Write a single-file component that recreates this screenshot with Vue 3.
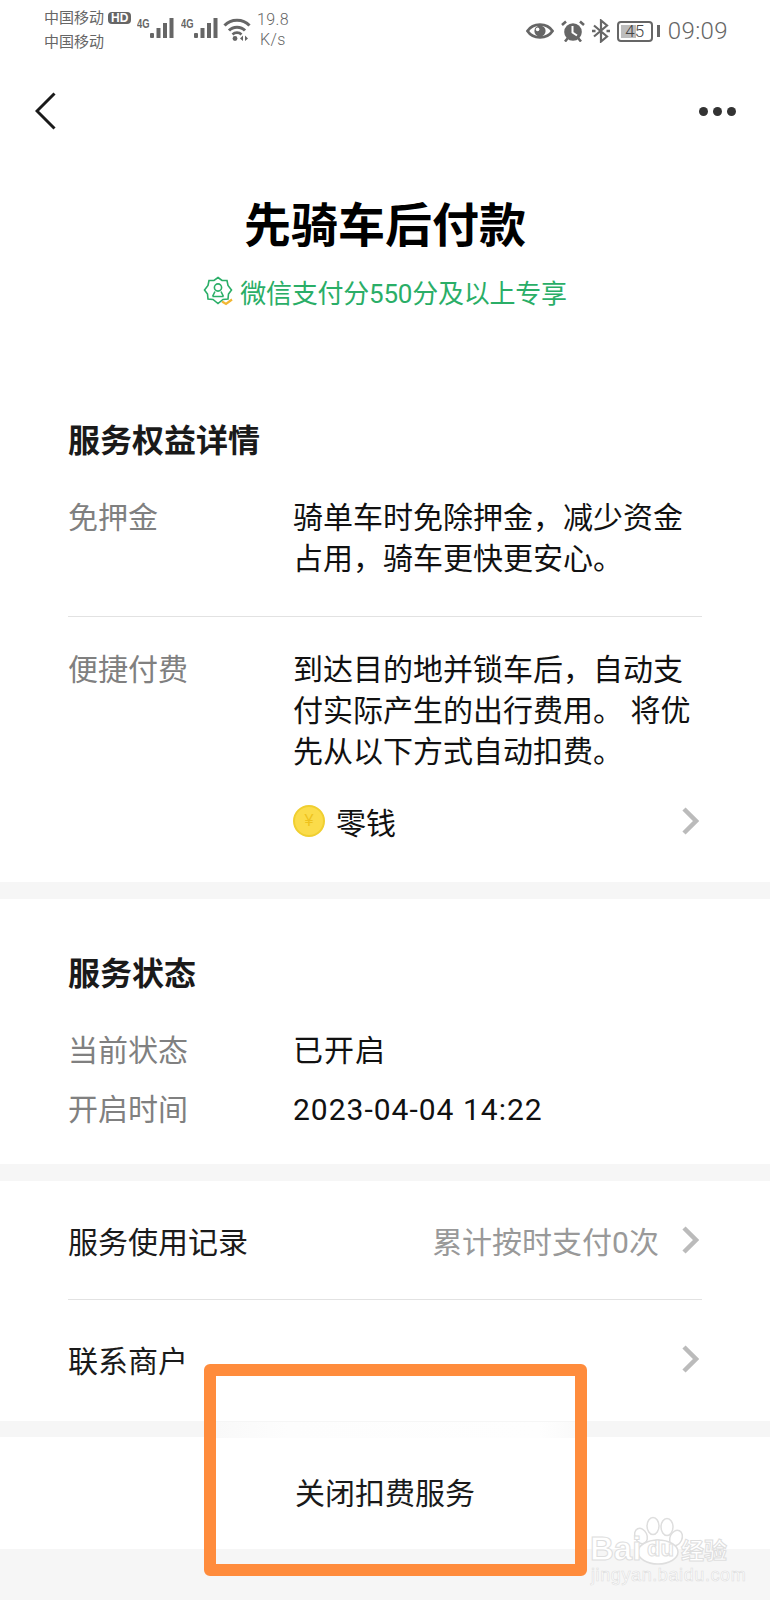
<script setup>
const benefits = [
  { label: "免押金", text: "骑单车时免除押金，减少资金占用，骑车更快更安心。" },
  { label: "便捷付费", text: "到达目的地并锁车后，自动支付实际产生的出行费用。 将优先从以下方式自动扣费。" }
]
const status = [
  { label: "当前状态", value: "已开启" },
  { label: "开启时间", value: "2023-04-04 14:22" }
]
</script>

<template>
  <div class="page">
    <div class="statusbar">
      <div class="carrier">
        <div class="carrier-line">中国移动<span class="hd">HD</span></div>
        <div class="carrier-line">中国移动</div>
      </div>
      <div class="signal" v-for="n in 2" :key="n">
        <span class="net">4G</span>
        <svg width="24" height="21" viewBox="0 0 24 21">
          <rect x="0" y="15" width="4" height="5" rx="1" fill="#666" />
          <rect x="6.5" y="10" width="4" height="10" fill="#666" />
          <rect x="13" y="5" width="4" height="15" fill="#666" />
          <rect x="19.5" y="0" width="4" height="20" fill="#666" />
        </svg>
      </div>
      <svg class="wifi" width="28" height="23" viewBox="0 0 28 23" fill="none" stroke="#666" stroke-width="3">
        <path d="M1.5 7.5 C8 0.5 20 0.5 26.5 7.5" />
        <path d="M6 12.5 C10 8 18 8 22 12.5" />
        <path d="M9.5 16.5 C12 14 16 14 18.5 16.5" stroke-width="2.6" />
        <circle cx="12" cy="20.5" r="2.4" fill="#666" stroke="none" />
        <path d="M20 17.5 l-3 3 l3 2.5 z M22 17.5 l3 3 l-3 2.5 z" fill="#666" stroke="none" />
      </svg>
      <div class="speed">
        <div>19.8</div>
        <div>K/s</div>
      </div>
      <div class="status-right">
        <svg width="28" height="18" viewBox="0 0 28 18">
          <path d="M1.5 9 C7 0.5 21 0.5 26.5 9 C21 17.5 7 17.5 1.5 9 Z" fill="none" stroke="#666" stroke-width="2.8" />
          <circle cx="14" cy="9" r="5.6" fill="#666" />
          <circle cx="11.6" cy="7.4" r="1.8" fill="#fff" />
        </svg>
        <svg width="24" height="22" viewBox="0 0 24 22">
          <circle cx="12" cy="12" r="8.8" fill="#666" />
          <path d="M11.5 6 V12.5 L16 15.5" fill="none" stroke="#fff" stroke-width="2" />
          <path d="M1 5 L5 1.5 M23 5 L19 1.5" stroke="#666" stroke-width="2.6" />
          <path d="M4 21.5 L6.5 18.5 M20 21.5 L17.5 18.5" stroke="#666" stroke-width="2.6" />
        </svg>
        <svg width="18" height="24" viewBox="0 0 18 24" fill="none" stroke="#666" stroke-width="2.2">
          <path d="M2 6.5 L15 17.5 L9 22.5 V1.5 L15 6.5 L2 17.5" />
          <path d="M14.5 12 h3.5 M0 12 h3.5" stroke-width="2.6" />
        </svg>
        <div class="battery">
          <div class="battery-body">
            <span class="battery-fill"></span>
            <span class="battery-num">45</span>
          </div>
          <span class="battery-tip"></span>
        </div>
        <span class="clock">09:09</span>
      </div>
    </div>

    <div class="nav">
      <svg width="22" height="38" viewBox="0 0 22 38" fill="none" stroke="#1a1a1a" stroke-width="3">
        <path d="M19.5 1.5 L2 19 L19.5 36.5" />
      </svg>
      <div class="dots"><i></i><i></i><i></i></div>
    </div>

    <h1 class="title">先骑车后付款</h1>
    <div class="badge">
      <svg width="30" height="30" viewBox="0 0 30 30" fill="none" stroke="#2aae67" stroke-width="1.6">
        <path d="M15 1.5 L19 4.5 L24 4.5 L25 9.5 L28.5 14 L25.5 18 L25 23 L20 23.5 L15 27.5 L10 23.5 L5 23 L4.5 18 L1.5 14 L5 9.5 L6 4.5 L11 4.5 Z" />
        <circle cx="15" cy="11.5" r="3.6" />
        <path d="M9.5 20.5 L12 15.5 M20.5 20.5 L18 15.5 M9.5 20.5 H20.5" />
        <path d="M19 25.5 L23 28 L29 23.5" stroke="#f2b632" stroke-width="2.2" />
      </svg>
      <span>微信支付分550分及以上专享</span>
    </div>

    <section class="benefits">
      <h2 class="heading">服务权益详情</h2>
      <div class="benefit" v-for="item in benefits" :key="item.label">
        <div class="label">{{ item.label }}</div>
        <div class="body">{{ item.text }}</div>
      </div>
      <div class="pay-row">
        <span class="coin">¥</span>
        <span class="pay-name">零钱</span>
        <svg class="chevron" width="18" height="28" viewBox="0 0 18 28" fill="none" stroke="#bbb" stroke-width="4.5">
          <path d="M3 2 L15 14 L3 26" />
        </svg>
      </div>
    </section>

    <section class="state">
      <h2 class="heading">服务状态</h2>
      <div class="state-row" v-for="item in status" :key="item.label">
        <div class="label">{{ item.label }}</div>
        <div class="value">{{ item.value }}</div>
      </div>
    </section>

    <section class="links">
      <div class="link link-line">
        <span>服务使用记录</span>
        <span class="hint">累计按时支付0次</span>
        <svg class="chevron" width="18" height="28" viewBox="0 0 18 28" fill="none" stroke="#bbb" stroke-width="4.5">
          <path d="M3 2 L15 14 L3 26" />
        </svg>
      </div>
      <div class="link">
        <span>联系商户</span>
        <span class="hint"></span>
        <svg class="chevron" width="18" height="28" viewBox="0 0 18 28" fill="none" stroke="#bbb" stroke-width="4.5">
          <path d="M3 2 L15 14 L3 26" />
        </svg>
      </div>
    </section>

    <div class="action">关闭扣费服务</div>
    <div class="footer"></div>

    <div class="highlight"></div>
    <div class="watermark">
      <svg class="paw" width="60" height="50" viewBox="0 0 60 50" fill="#fff" stroke="#dedede" stroke-width="1.5">
        <ellipse cx="11" cy="20" rx="6" ry="8" transform="rotate(-25 11 20)" />
        <ellipse cx="23" cy="10" rx="6" ry="8.5" />
        <ellipse cx="37" cy="11" rx="6" ry="8.5" />
        <ellipse cx="46" cy="22" rx="6" ry="8" transform="rotate(25 46 22)" />
        <ellipse cx="28" cy="36" rx="20" ry="12" />
      </svg>
      <div class="wm-main">
        <span class="wm-bai">Bai</span>
        <span class="wm-du">du</span>
        <span class="wm-cn">经验</span>
      </div>
      <div class="wm-url">jingyan.baidu.com</div>
    </div>
  </div>
</template>

<style>
html, body {
  margin: 0;
  background: #fff;
}
</style>

<style scoped>
.page {
  position: relative;
  width: 770px;
  height: 1600px;
  overflow: hidden;
  background: #fff;
  color: #1a1a1a;
  font-family: "Roboto", "Noto Sans CJK SC", sans-serif;
  display: flex;
  flex-direction: column;
}

.statusbar {
  height: 62px;
  box-sizing: border-box;
  padding: 6px 0 0 44px;
  display: flex;
  align-items: flex-start;
  color: #666;
  flex-shrink: 0;
}
.carrier {
  width: 93px;
  font-size: 15px;
}
.carrier-line {
  height: 24px;
  line-height: 24px;
  display: flex;
  align-items: center;
  white-space: nowrap;
}
.hd {
  margin-left: 4px;
  background: #666;
  color: #fff;
  font: bold 12px/12px "Liberation Sans", sans-serif;
  padding: 0 3px;
  border-radius: 4px;
}
.signal {
  width: 44px;
  display: flex;
  align-items: flex-start;
  padding-top: 11px;
}
.net {
  font: bold 13px/13px "Liberation Sans", sans-serif;
  transform: scaleX(0.72);
  transform-origin: left;
  width: 13px;
}
.signal svg {
  margin-top: 1px;
}
.wifi {
  margin: 12px 0 0 -2px;
}
.speed {
  margin-left: 0;
  width: 44px;
  padding-top: 4px;
  text-align: center;
  font-size: 16px;
  line-height: 20px;
  letter-spacing: 0.4px;
  font-weight: 300;
}
.status-right {
  margin-left: auto;
  padding: 11px 42px 0 0;
  display: flex;
  align-items: center;
  gap: 7px;
}
.battery {
  display: flex;
  align-items: center;
  gap: 4px;
}
.battery-body {
  position: relative;
  width: 32px;
  height: 17px;
  border: 2px solid #666;
  border-radius: 4px;
}
.battery-fill {
  position: absolute;
  left: 2px;
  top: 2px;
  bottom: 2px;
  width: 15px;
  background: #bdbdbd;
}
.battery-num {
  position: absolute;
  inset: 0;
  text-align: center;
  font-size: 17px;
  line-height: 17px;
  font-weight: 300;
  color: #444;
}
.battery-tip {
  width: 3px;
  height: 12px;
  background: #666;
}
.clock {
  font-size: 24px;
  line-height: 28px;
  font-weight: 300;
  margin-left: 1px;
  letter-spacing: 0.4px;
}

.nav {
  height: 98px;
  flex-shrink: 0;
  display: flex;
  align-items: center;
  justify-content: space-between;
  padding: 0 34px 0 35px;
}
.dots {
  display: flex;
  gap: 5px;
}
.dots i {
  width: 9px;
  height: 9px;
  border-radius: 50%;
  background: #333;
}

.title {
  margin: 36px 0 0;
  font-size: 47px;
  line-height: 60px;
  font-weight: 700;
  text-align: center;
  color: #000;
}
.badge {
  margin-top: 15px;
  height: 40px;
  display: flex;
  align-items: center;
  justify-content: center;
  gap: 7px;
  color: #2aae67;
  font-size: 26px;
  letter-spacing: -0.25px;
}

.benefits {
  padding: 0 68px;
  height: 588px;
  box-sizing: border-box;
  border-bottom: 17px solid #f6f6f6;
}
.heading {
  margin: 0;
  font-size: 32px;
  line-height: 44px;
  font-weight: 700;
}
.benefits .heading {
  margin-top: 108px;
}
.label {
  width: 225px;
  flex-shrink: 0;
  color: #808080;
  font-size: 30px;
}
.benefit {
  display: flex;
  font-size: 30px;
  line-height: 41px;
  padding: 34px 0 37px;
  border-bottom: 1px solid #e2e2e2;
}
.benefit + .benefit {
  border-bottom: 0;
  padding: 32px 0 0;
}
.body {
  flex: 1;
  color: #111;
}
.pay-row {
  margin: 29px 0 0 225px;
  height: 40px;
  display: flex;
  align-items: center;
  font-size: 30px;
  color: #111;
}
.coin {
  width: 32px;
  height: 32px;
  box-sizing: border-box;
  border-radius: 50%;
  border: 2px solid #f0cf30;
  background: #fbdc4a;
  color: #eec21d;
  font: 16px/28px "Liberation Sans", sans-serif;
  text-align: center;
}
.pay-name {
  margin-left: 11px;
  flex: 1;
}
.chevron {
  flex-shrink: 0;
  margin-right: 3px;
}

.state {
  height: 282px;
  box-sizing: border-box;
  padding: 53px 68px 0;
  border-bottom: 17px solid #f6f6f6;
}
.state .heading {
  margin-bottom: 33px;
}
.state-row {
  display: flex;
  font-size: 30px;
  height: 59px;
  line-height: 44px;
}
.value {
  flex: 1;
  color: #111;
  letter-spacing: 1px;
}

.links {
  height: 256px;
  box-sizing: border-box;
  padding: 0 68px;
  border-bottom: 16px solid #f6f6f6;
}
.link {
  height: 118px;
  display: flex;
  align-items: center;
  font-size: 30px;
}
.link-line {
  border-bottom: 1px solid #e2e2e2;
}
.hint {
  flex: 1;
  text-align: right;
  color: #999;
  margin-right: 22px;
}

.action {
  height: 112px;
  box-sizing: border-box;
  padding: 3px 0 1px;
  line-height: 108px;
  text-align: center;
  font-size: 30px;
  flex-shrink: 0;
}
.footer {
  flex: 1;
  background: #f6f6f6;
}

.highlight {
  position: absolute;
  left: 204px;
  top: 1364px;
  width: 383px;
  height: 212px;
  box-sizing: border-box;
  border: 12px solid #ff8c3c;
  border-radius: 6px;
}
.highlight::before {
  content: "";
  position: absolute;
  left: 0;
  right: 0;
  top: 46px;
  height: 16px;
  background: linear-gradient(90deg, #f9f9f9, #fdfdfd 20%, #fefefe 90%, #fafafa);
}

.watermark {
  position: absolute;
  left: 590px;
  top: 1536px;
  width: 140px;
  display: flex;
  flex-direction: column;
  gap: 4px;
}
.paw {
  position: absolute;
  left: 40px;
  top: -20px;
}
.wm-main {
  position: relative;
  height: 26px;
  display: flex;
  align-items: center;
  white-space: nowrap;
  color: #fff;
  font: bold 33px/26px "Liberation Sans", sans-serif;
  -webkit-text-stroke: 1px #dedede;
}
.wm-bai {
  width: 57px;
}
.wm-du {
  width: 34px;
  font-size: 22px;
}
.wm-cn {
  font-size: 23px;
  font-family: "Noto Sans CJK SC", sans-serif;
}
.wm-url {
  position: relative;
  margin-left: 1px;
  white-space: nowrap;
  color: #fff;
  font: 18px/18px "Liberation Sans", sans-serif;
  letter-spacing: 0.6px;
  -webkit-text-stroke: 0.6px #dedede;
}
</style>
